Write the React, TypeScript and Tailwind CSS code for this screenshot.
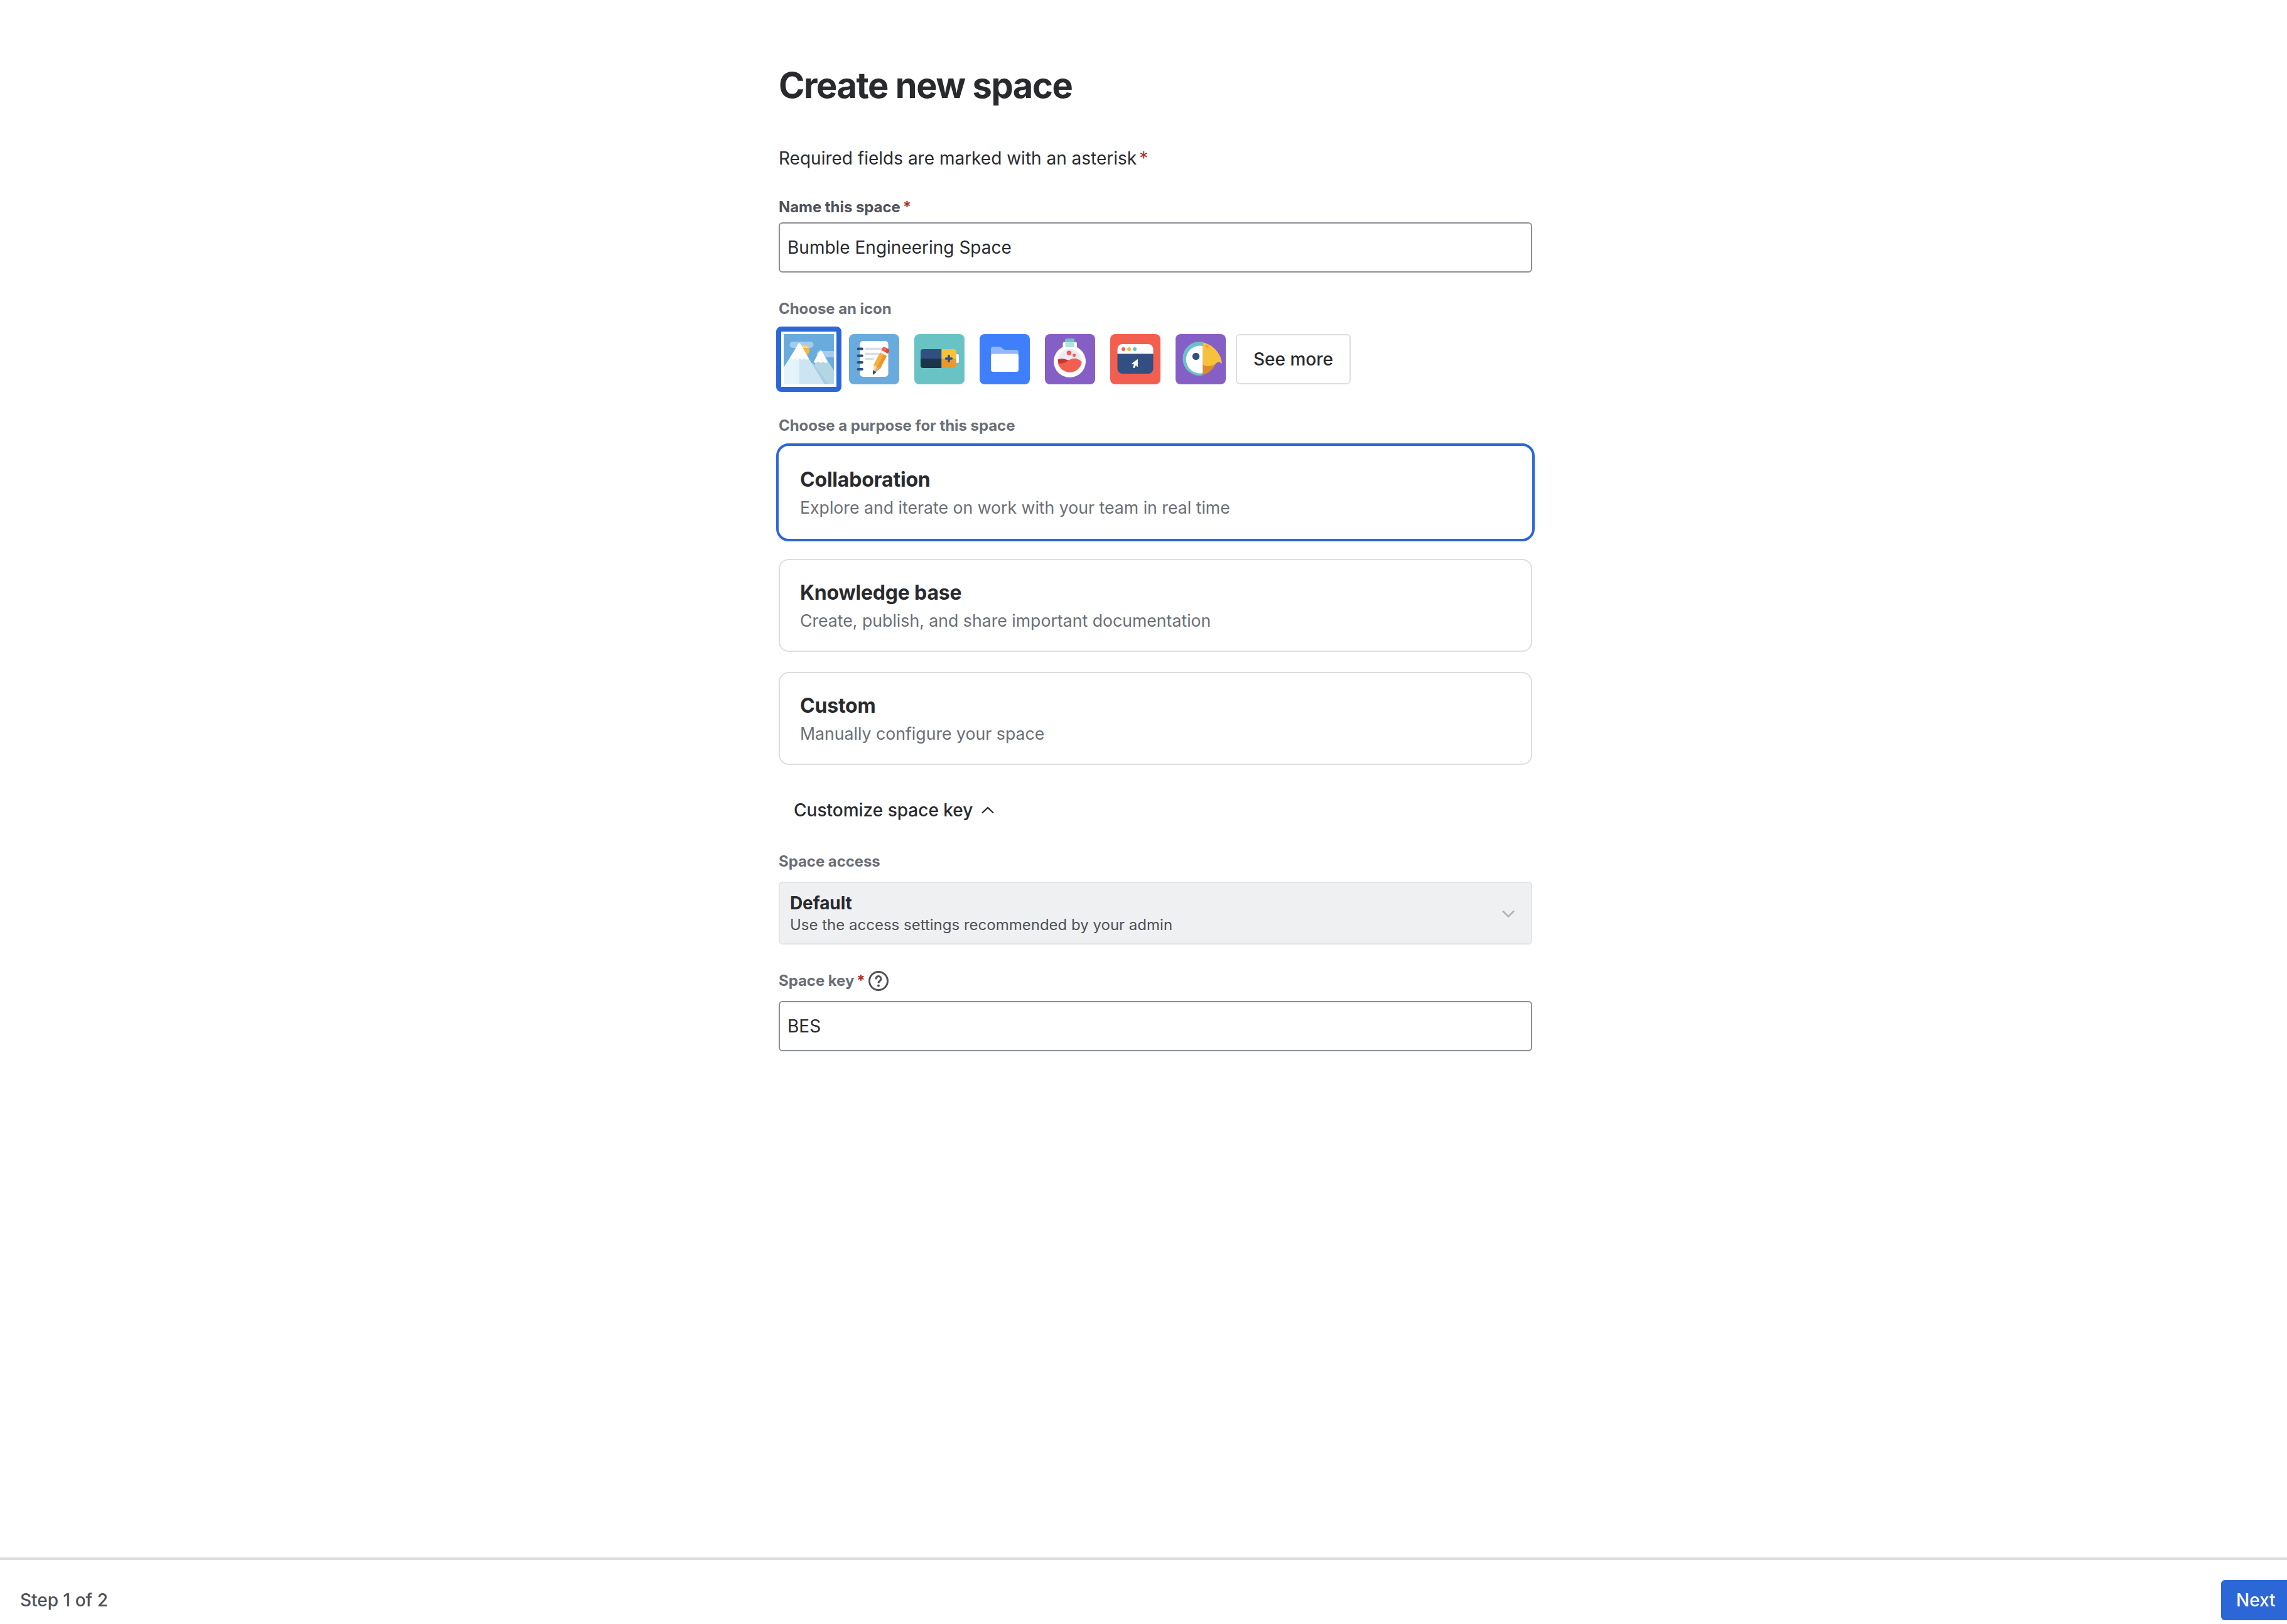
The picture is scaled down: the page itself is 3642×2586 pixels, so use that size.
import React from 'react';

type IconProps = { selected?: boolean; children: React.ReactNode };

const SpaceIcon = ({ selected, children }: IconProps) => (
  <button className={selected ? '-m-[12px] size-[104px] rounded-[8px] border-[8px] border-[#2c67d8] bg-white p-[4px]' : 'size-[80px] overflow-hidden rounded-[8px]'}>
    <svg viewBox="0 0 80 80" className="block size-[80px]">{children}</svg>
  </button>
);

const Mountains = () => (
  <>
    <rect width="80" height="80" fill="#6aabde" />
    <circle cx="33" cy="26" r="8.3" fill="#f6b73c" />
    <rect x="9.500" y="12" width="38" height="10" rx="5" fill="#fff" fillOpacity=".4" />
    <path d="M80 27v10H57.500a5 5 0 0 1 0-10Z" fill="#fff" fillOpacity=".4" />
    <path d="M59.500 25.500 80 58v22H35Z" fill="#b4d5e2" />
    <path d="M40 45 47 46.500 71.500 80H55Z" fill="#a5cde6" />
    <path d="M59.500 25.500Q57.500 26 56.500 28L47.500 45 51 46 55 44 59 46 63 44 66 46 70 45 61.500 28Q60.500 26 59.500 25.500Z" fill="#fff" />
    <path d="M25 14 65 80H25Z" fill="#cde4f2" />
    <path d="M25 14V80H0V53Z" fill="#e5f4fb" />
    <path d="M25 14Q23.500 14.500 22.500 16.500L10 38 14.500 41 18 38.500 22 41 25 38.500 29 41 33 38.500 37 41 40 39 27.500 16.500Q26.500 14.500 25 14Z" fill="#fff" />
  </>
);

const Notebook = () => (
  <>
    <rect width="80" height="80" fill="#6aabde" />
    <rect x="17.500" y="11" width="45" height="57" rx="5" fill="#fff" />
    <path d="M27 23.500H52M27 31.500H47M27 39.500H38.500" stroke="#d5dfe9" strokeWidth="3.500" strokeLinecap="round" />
    <path d="M14.500 23.500h6.500M14.500 34.500h6.500M14.500 45h6.500M14.500 56h6.500" stroke="#314f80" strokeWidth="3.800" strokeLinecap="round" />
    <g transform="translate(38.500 64) rotate(27)">
      <path d="M0 0-6-14V-36H6V-14Z" fill="#fcd4a0" />
      <path d="M0 0 6-14H0Z" fill="#dcab7c" />
      <path d="M-6-12V-36H0V-12L-3-14.500Z" fill="#f7ae38" />
      <path d="M6-12V-36H0V-12L3-14.500Z" fill="#e9982f" />
      <path d="M0 0-2.500-5 2.500-5Z" fill="#314f80" stroke="#314f80" />
      <path d="M-6-40H6V-36H-6Z" fill="#f3f0f6" />
      <path d="M-6-40v-4q0-3 3-3h3v7Z" fill="#f25f50" />
      <path d="M6-40v-4q0-3-3-3h-3v7Z" fill="#d04c45" />
    </g>
  </>
);

const Battery = () => (
  <>
    <rect width="80" height="80" fill="#69c3c4" />
    <rect x="62" y="32" width="9" height="14" rx="2.500" fill="#fff" />
    <path d="M14 24H43.500V39H10V28a4 4 0 0 1 4-4Z" fill="#314f80" />
    <path d="M10 39H43.500V54H14a4 4 0 0 1-4-4Z" fill="#1b3449" />
    <path d="M43.500 24H63a4 4 0 0 1 4 4V39H43.500Z" fill="#f7c13c" />
    <path d="M43.500 39H67V50a4 4 0 0 1-4 4H43.500Z" fill="#e9982f" />
    <path d="M55 34.500V43.500M50.500 39H59.500" stroke="#314f80" strokeWidth="3.600" strokeLinecap="round" />
  </>
);

const Folder = () => (
  <>
    <rect width="80" height="80" fill="#3f7ffb" />
    <path d="M18 36V24a4 4 0 0 1 4-4H31Q33.500 20 35.500 22L38 24Q39.500 25 42 25H58a4 4 0 0 1 4 4V36Z" fill="#90b7ff" />
    <rect x="18" y="31.500" width="44" height="28.500" rx="3.500" fill="#fff" />
  </>
);

const Flask = () => (
  <>
    <rect width="80" height="80" fill="#865fc6" />
    <path d="M28.500 15a2.500 2.500 0 0 1 2.500-2.500H48.500A2.500 2.500 0 0 1 51 15V24H28.500Z" fill="#fff" />
    <circle cx="39.500" cy="43.500" r="25.500" fill="#fff" />
    <circle cx="39.500" cy="43" r="19.300" fill="#f0eaf8" />
    <path d="M20.500 40.500Q26 38 31 39.500T39 42L36 50H22Z" fill="#c9372c" />
    <path d="M21 46.500Q29 48 36 43T50 39Q55 40 58.700 44.500A19.300 19.300 0 0 1 21 46.500Z" fill="#f25f50" />
    <circle cx="38.500" cy="30" r="3.800" fill="#f25f50" />
    <circle cx="46.500" cy="33.500" r="2.600" fill="#f25f50" />
    <rect x="32.500" y="7.500" width="14.500" height="13.500" rx="1.500" fill="#b2e3e3" />
    <path d="M32.500 12.500V9q0-1.500 1.500-1.500H45.500Q47 7.500 47 9V12.500Z" fill="#69c3c4" />
  </>
);

const Browser = () => (
  <>
    <rect width="80" height="80" fill="#f25f50" />
    <path d="M11.500 31.500V24a8 8 0 0 1 8-8H60.500a8 8 0 0 1 8 8V31.500Z" fill="#fff" />
    <path d="M11.500 31.500H68.500V55a8 8 0 0 1-8 8H19.500a8 8 0 0 1-8-8Z" fill="#314f80" />
    <circle cx="21" cy="24" r="3" fill="#f25f50" />
    <circle cx="30" cy="24" r="3" fill="#f6b73c" />
    <circle cx="39" cy="24" r="3" fill="#69c3c4" />
    <path d="M43.500 40.500 34.500 47 38.500 48 36.500 53 38.500 53.500 40.500 49.500 43.500 51.500Z" fill="#fff" stroke="#fff" strokeLinejoin="round" />
  </>
);

const Parrot = () => (
  <>
    <rect width="80" height="80" fill="#865fc6" />
    <path d="M43.500 12.500A27 27 0 1 0 43.500 65.500Z" fill="#69c3c4" />
    <path d="M43.500 19A22 22 0 1 0 43.500 62Z" fill="#fff" />
    <circle cx="32.500" cy="35.500" r="5.700" fill="#314f80" />
    <path d="M43.500 44H65Q60 60 43.500 65Z" fill="#dc8b2b" />
    <path d="M43.500 13Q56 16 64.500 25.500T74 47Q68 42 64 47 59 51 52 51T43.500 47.500Z" fill="#f7c13c" />
    <ellipse cx="50" cy="19.300" rx="2.800" ry="1.200" fill="#e9982f" transform="rotate(12 50 19.300)" />
  </>
);

const purposes = [
  { title: 'Collaboration', text: 'Explore and iterate on work with your team in real time', selected: true },
  { title: 'Knowledge base', text: 'Create, publish, and share important documentation' },
  { title: 'Custom', text: 'Manually configure your space' },
];

const Asterisk = () => <span className="ml-[4px] text-[#ae2e24]">*</span>;

const App = () => {
  return (
    <div className="flex h-[2586px] flex-col bg-white font-['Inter',sans-serif] text-[28px] leading-[40px] text-[#292a2e]">
      <main className="ml-[1240px] w-[1200px] flex-1">
        <h1 className="mt-[104px] text-[56px] leading-[64px] font-[653] tracking-[-1.430px]">Create new space</h1>
        <p className="mt-[64px]">Required fields are marked with an asterisk<Asterisk /></p>

        <label className="mt-[42px] block text-[24px] leading-[32px] font-[653] tracking-[-0.060px] text-[#505258]">Name this space<Asterisk /></label>
        <input
          className="mt-[8px] block h-[80px] w-full rounded-[6px] border-2 border-[#8c8f97] px-[12px]"
          defaultValue="Bumble Engineering Space"
        />

        <div className="mt-[42px] text-[24px] leading-[32px] font-[653] tracking-[-0.060px] text-[#6b6e76]">Choose an icon</div>
        <div className="mt-[24px] flex">
          <div className="mr-[16px] flex gap-[24px] pl-[8px]">
            <SpaceIcon selected><Mountains /></SpaceIcon>
            <SpaceIcon><Notebook /></SpaceIcon>
            <SpaceIcon><Battery /></SpaceIcon>
            <SpaceIcon><Folder /></SpaceIcon>
            <SpaceIcon><Flask /></SpaceIcon>
            <SpaceIcon><Browser /></SpaceIcon>
            <SpaceIcon><Parrot /></SpaceIcon>
          </div>
          <button className="h-[80px] w-[183px] rounded-[6px] border-2 border-[#dddede] font-medium">See more</button>
        </div>

        <div className="mt-[50px] text-[24px] leading-[32px] font-[653] tracking-[-0.060px] text-[#6b6e76]">Choose a purpose for this space</div>
        <div className="mt-[16px] flex flex-col gap-[32px]">
          {purposes.map((p) => (
            <div
              key={p.title}
              className={p.selected
                ? 'h-[148px] rounded-[16px] border-2 border-transparent px-[32px] pt-[32px] outline-4 outline-[#2c67d8]'
                : 'h-[148px] rounded-[16px] border-2 border-[#dddede] px-[32px] pt-[32px]'}>
              <div className="text-[32px] leading-[40px] font-[653] tracking-[-0.200px]">{p.title}</div>
              <div className="mt-[4px] text-[26.667px] leading-[40px] text-[#6b6e76]">{p.text}</div>
            </div>
          ))}
        </div>

        <button className="mt-[52px] ml-[24px] flex items-center font-medium">
          Customize space key
          <svg viewBox="0 0 24 16" className="ml-[12px] h-[16px] w-[24px]" fill="none" stroke="#292a2e" strokeWidth="2.300"><path d="m3 12.500 9-8.500 9 8.500" /></svg>
        </button>

        <div className="mt-[46px] text-[24px] leading-[32px] font-[653] tracking-[-0.060px] text-[#6b6e76]">Space access</div>
        <div className="mt-[16px] flex h-[100px] items-center justify-between rounded-[6px] border-2 border-[#e3e4e6] bg-[#eff0f2] pr-[24px] pl-[16px]">
          <div className="pt-[2px]">
            <div className="leading-[36px] font-[653] tracking-[-0.100px]">Default</div>
            <div className="text-[24px] leading-[34px] text-[#505258]">Use the access settings recommended by your admin</div>
          </div>
          <svg viewBox="0 0 24 16" className="h-[16px] w-[24px]" fill="none" stroke="#b0b2b7" strokeWidth="2.500"><path d="m3 4.500 9 9 9-9" /></svg>
        </div>

        <div className="mt-[42px] flex items-center text-[24px] leading-[32px] font-[653] tracking-[-0.060px] text-[#6b6e76]">
          Space key<Asterisk />
          <svg viewBox="0 0 32 32" className="ml-[5px] size-[32px]" fill="none" stroke="#505258" strokeWidth="3">
            <circle cx="16" cy="16" r="14.500" />
            <path d="M12 13.500v-1a4 4 0 1 1 6.300 3.300Q16 17.300 16 19.500" />
            <circle cx="16" cy="23.500" r="2" fill="#505258" stroke="none" />
          </svg>
        </div>
        <input className="mt-[16px] block h-[80px] w-full rounded-[6px] border-2 border-[#8c8f97] px-[12px]" defaultValue="BES" />
      </main>

      <footer className="flex h-[106px] items-start justify-between overflow-hidden border-t-4 border-[#dddede] pt-[32px] pl-[32px] font-medium text-[#505258]">
        <span className="leading-[64px]">Step 1 of 2</span>
        <button className="h-[64px] w-[105px] rounded-l-[6px] bg-[#2c67d8] pl-[24px] text-left text-white">Next</button>
      </footer>
    </div>
  );
};

export default App;
